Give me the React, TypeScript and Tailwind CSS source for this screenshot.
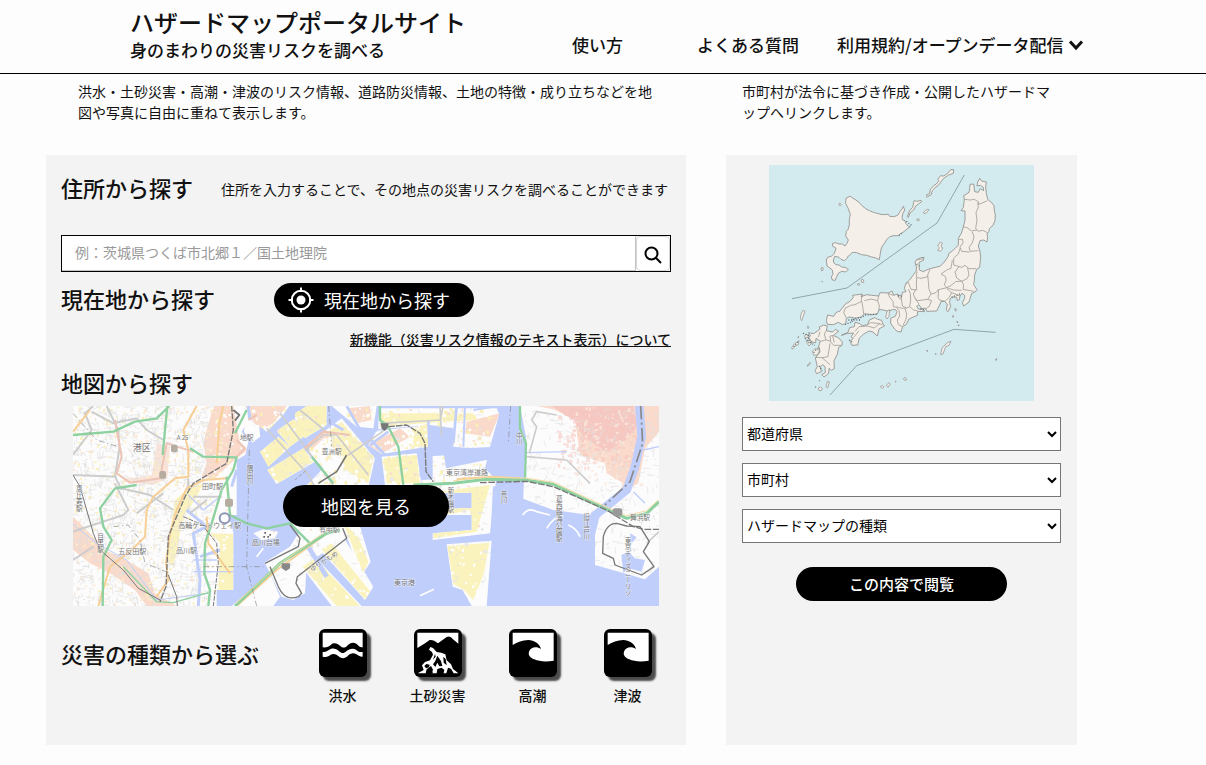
import type { ReactNode } from "react";

function makeRandom(seed: number) {
  let s = seed;
  return () => {
    s = (s * 1103515245 + 12345) % 2147483648;
    return s / 2147483648;
  };
}

type Zone = [number, number, number, number];

function speckle(seed: number, count: number, [x0, y0, x1, y1]: Zone, min: number, max: number) {
  const rnd = makeRandom(seed);
  let d = "";
  for (let i = 0; i < count; i++) {
    const x = Math.round(x0 + rnd() * (x1 - x0));
    const y = Math.round(y0 + rnd() * (y1 - y0));
    const w = Math.round(min + rnd() * (max - min));
    const h = Math.round(min + rnd() * (max - min));
    d += `M${x} ${y}h${w}v${h}h${-w}z`;
  }
  return d;
}

function streets(seed: number, count: number, [x0, y0, x1, y1]: Zone) {
  const rnd = makeRandom(seed);
  let d = "";
  for (let i = 0; i < count; i++) {
    const x = Math.round(x0 + rnd() * (x1 - x0));
    const y = Math.round(y0 + rnd() * (y1 - y0));
    const a = Math.round(rnd() * 18 + 5);
    const b = Math.round(rnd() * 14 - 7);
    d += rnd() > 0.5 ? `M${x} ${y}l${a} ${b}` : `M${x} ${y}l${b} ${a}`;
  }
  return d;
}

const LAND = [
  "M39 18H560L565 60 545 95 565 125 556 165 530 180V345H505L520 395V570H470V618H39Z",
  "M570 18H688L665 50 620 95 575 60Z",
  "M600 155L655 110 690 140 625 200Z",
  "M622 210L730 145 765 185 650 252Z",
  "M650 92L700 58 745 100 690 140Z",
  "M705 40L740 18H800V75L735 115 705 70Z",
  "M745 130L845 55 945 175 925 262H735L790 205 750 160Z",
  "M815 18H950L940 85 890 80Z",
  "M925 135L950 92 1085 78 1110 60 1105 140 1040 150 965 162Z",
  "M955 25H1310L1325 60 1300 150 1180 140V85L1110 75 955 88Z",
  "M965 170L1070 160 1085 255H975Z",
  "M555 50L598 75 600 110 578 128 552 95Z",
  "M735 262L900 250V400L640 485 610 490 690 440 715 400 690 372Z",
  "M615 490L660 460 860 350 900 400 880 440 860 415 740 490 735 580 700 600 665 590Z",
  "M580 400L610 388 655 395 645 415 605 420Z",
  "M515 618L630 520 660 590 640 618Z",
  "M725 500L765 470 905 618H815Z",
  "M780 450L850 410 940 560 915 600Z",
  "M850 370L900 380 932 485 900 535Z",
  "M1118 160L1150 155 1158 205 1290 178 1300 236 1292 400 1118 420V400L1235 390V345H1130V325H1235V278H1118Z",
  "M1160 433L1295 422 1280 618H1235L1208 570 1178 560Z",
  "M1380 18H1797V500L1755 538 1605 495V405L1625 325 1590 345 1480 330 1385 295Z",
  "M1085 240L1385 225 1390 250 1118 278 1085 262Z",
];

const LABELS: { x: number; y: number; size: number; text: string; vertical?: boolean }[] = [
  { x: 218, y: 154, size: 27, text: "港区" },
  { x: 350, y: 121, size: 18, text: "A 25" },
  { x: 540, y: 120, size: 20, text: "地駅" },
  { x: 426, y: 266, size: 21, text: "田町駅" },
  { x: 355, y: 385, size: 21, text: "高輪ゲートウェイ駅" },
  { x: 175, y: 461, size: 21, text: "五反田駅" },
  { x: 348, y: 458, size: 21, text: "品川駅" },
  { x: 575, y: 435, size: 21, text: "品川台場" },
  { x: 785, y: 163, size: 20, text: "豊洲駅" },
  { x: 778, y: 397, size: 20, text: "有明駅" },
  { x: 1158, y: 226, size: 21, text: "東京湾岸道路" },
  { x: 1002, y: 556, size: 21, text: "東京港" },
  { x: 1710, y: 360, size: 20, text: "舞浜駅" },
  { x: 570, y: 195, size: 20, text: "隅田川", vertical: true },
  { x: 58, y: 255, size: 20, text: "恵比寿駅", vertical: true },
  { x: 122, y: 398, size: 20, text: "目黒駅", vertical: true },
  { x: 1378, y: 95, size: 20, text: "中川", vertical: true },
  { x: 1332, y: 272, size: 20, text: "荒川", vertical: true },
  { x: 1173, y: 262, size: 19, text: "新木場駅", vertical: true },
  { x: 1498, y: 285, size: 20, text: "葛西臨海公園駅", vertical: true },
  { x: 1580, y: 340, size: 20, text: "旧江戸川", vertical: true },
  { x: 1704, y: 410, size: 20, text: "東京ディズニーリゾ", vertical: true },
];

function BayMap() {
  return (
    <svg viewBox="39 18 1758 600" preserveAspectRatio="none" className="block h-[200px] w-full" aria-hidden="true">
      <defs>
        <clipPath id="land">
          {LAND.map((d) => (
            <path key={d} d={d} />
          ))}
        </clipPath>
      </defs>
      <path fill="#c0cefb" d="M39 18h1758v600H39z" />
      <g fill="#fcfcfc">
        {LAND.map((d) => (
          <path key={d} d={d} />
        ))}
      </g>
      <g clipPath="url(#land)">
        <g fill="#f9dacb">
          <path d="M460 18H520L540 130 562 150 530 175 500 200 465 235 425 230 440 190 430 130Z" />
          <path d="M290 130L330 140 322 235 280 255 190 245 190 238 275 225Z" opacity=".7" />
          <path d="M39 350L75 385 135 450 190 475 265 520 285 580 350 618H260L225 570 150 520 90 490 39 450Z" />
          <path d="M1430 18H1797V95L1755 145 1735 250 1675 285 1690 250 1640 220 1635 190 1560 165 1545 60 1480 28Z" />
          <path d="M555 18H680L640 70 600 90 575 60Z" />
          <path d="M730 130L790 95 870 105 890 120 860 115 790 115 755 150ZM925 135L1020 85 1050 110 965 160ZM1220 65L1320 40 1290 110 1215 100ZM860 25L930 18 935 60 890 70Z" />
        </g>
        <g fill="#fbf3bd">
          <path d="M330 400L345 300 385 265 430 250 405 300 370 350 340 500 318 480Z" />
          <path d="M455 400L520 402 520 570 475 572 480 430Z" />
          <path d="M600 155L655 110 690 140 625 200ZM622 210L730 145 760 185 650 252Z" />
          <path d="M650 92L700 58 745 100 690 140ZM705 40L740 18H800V75L735 115 705 70ZM800 100L845 65 940 175 925 250 865 215Z" />
          <path d="M960 40H1240V60L1110 68 960 80ZM970 175L1070 165 1080 250 980 250ZM1060 85L1105 70V140L1060 140Z" />
          <path d="M1130 275L1290 255 1250 395 1120 415V400L1235 385 1230 330 1130 350Z" />
          <path d="M1162 438L1288 428 1272 520 1240 600 1212 570 1180 552Z" />
          <path d="M728 500L765 475 900 618H830ZM785 448L815 430 935 580 915 598ZM850 370L895 410 925 485 910 520Z" />
        </g>
        <path fill="#f3b9b9" opacity=".55" d="M1475 18L1720 18 1730 80 1690 125 1640 155 1570 110 1540 60Z" />
        <path fill="#f6c6bf" opacity=".6" d={speckle(11, 220, [1490, 18, 1735, 200], 3, 13)} />
        <path fill="#fbe6da" opacity=".8" d={speckle(13, 120, [1540, 18, 1740, 260], 3, 11)} />
        <path fill="#fbf1c0" d={speckle(21, 420, [39, 18, 520, 618], 2, 9)} />
        <path fill="#f9e6d3" d={speckle(31, 300, [39, 18, 500, 618], 2, 9)} />
        <path fill="#faefb6" d={speckle(41, 280, [590, 18, 1290, 260], 3, 12)} />
        <path fill="#f9dfcf" d={speckle(42, 110, [570, 18, 1290, 400], 3, 9)} />
        <path fill="#ffffff" d={speckle(43, 480, [450, 18, 1290, 600], 3, 10)} />
        <path fill="#e8e8e8" d={speckle(47, 110, [640, 100, 1290, 560], 4, 12)} />
        <path fill="none" stroke="#dfdfdf" strokeWidth="2" d={streets(51, 1300, [39, 18, 450, 618])} />
        <path fill="none" stroke="#e4e4e4" strokeWidth="2" d={streets(61, 300, [560, 18, 1290, 560])} />
        <path fill="none" stroke="#e2e2e2" strokeWidth="2" d={streets(71, 420, [1385, 30, 1797, 520])} />
      </g>

      <g fill="none" stroke="#c0cefb">
        <path strokeWidth="8" d="M860 18L895 80 975 165M800 60L850 90M955 18L948 95M1105 60L1112 240M1190 18L1180 130M930 135L985 95" />
        <path strokeWidth="6" d="M1215 18L1210 140M1240 30L1300 20" />
        <path strokeWidth="18" d="M1105 160L1290 150M1088 170V230" />
        <path strokeWidth="14" d="M745 440L800 530" />
        <path strokeWidth="9" d="M380 330L440 380 400 400 420 540 415 618M420 470L480 450M530 210L515 260" />
        <path strokeWidth="4" d="M385 285L430 330 480 290M400 480H470M400 515H520" />
        <path strokeWidth="3" d="M39 372L110 430 200 480 290 600 445 580" />
        <path strokeWidth="26" d="M1738 18L1745 110 1725 200 1700 270 1600 350" />
        <path strokeWidth="4" d="M1400 158L1520 155M1720 275L1755 310M1797 140L1750 150" />
      </g>
      <path fill="#c0cefb" d="M1325 18H1380L1398 110 1385 400H1290L1308 240 1275 205 1290 140Z" />
      <path fill="#c0cefb" d="M1684 465L1705 455 1725 475 1755 480 1745 515 1705 505 1690 520ZM1710 400L1730 412 1715 430Z" />
      <path
        fill="none"
        stroke="#fff"
        strokeWidth="5"
        d="M1388 345Q1405 320 1430 335L1470 345M1460 385Q1485 345 1510 350M1525 375Q1550 385 1560 410M590 470L610 445M1080 587L1122 568"
      />

      <g fill="none" stroke="#cdcdcd" strokeWidth="6" strokeLinejoin="round">
        <path d="M39 165L95 90 75 40 100 18M140 18L175 90 178 145 165 230 185 270M165 250L205 330 190 345 39 395M95 35L160 70 230 55 260 90 310 120M39 225L170 230M170 262L270 285 340 330M385 270V235M39 480L100 440M230 340L310 280M400 290H485M390 340L440 300" />
        <path d="M620 85L745 225 765 262M660 40L820 255M735 150L790 105 830 105 925 225M865 165L960 100 985 80M720 30L805 100M1140 18L1145 110M1150 18L1140 60 960 70" strokeWidth="5" />
        <path d="M1408 160L1430 80 1415 60 1430 35 1490 45M1400 170L1520 180 1590 250M1797 395L1760 430" strokeWidth="5" />
      </g>
      <g fill="none" stroke="#f7cf96" strokeWidth="6" strokeLinejoin="round">
        <path d="M39 95L90 30M410 18L370 90 385 150 385 230 345 235 280 290 260 330 255 410 215 450 150 500 115 618M490 18L478 70 470 190M500 235L430 240 380 265 350 330 330 400 318 490 325 540 290 590M440 350L445 430 510 520" />
        <path d="M530 618L650 510 800 400M1190 238L1290 230 1380 235" />
      </g>
      <path
        fill="none"
        stroke="#edc4b5"
        strokeWidth="6"
        d="M165 60L185 170 170 220 210 248 300 235 320 130 350 140 400 155M530 120L555 145 530 170M590 45L565 60M735 145L790 95 870 105"
      />
      <g fill="none" stroke="#8ed1a0" strokeWidth="7" strokeLinejoin="round">
        <path d="M39 105L160 95 225 65 290 55 328 18M322 18L315 90 308 165M390 145L430 170 530 172 520 210 485 270 455 370 435 430 433 520 450 570 445 618" />
        <path d="M560 30L525 100M500 230L510 345 560 370 620 385 690 370 750 430M230 255L165 265 120 325 130 380 155 420 130 470 128 618" />
        <path d="M755 170L820 250M960 18V60L985 80 1015 140 1030 255M1380 18V85L1398 130 1395 240" />
        <path strokeWidth="4" d="M190 500L290 605 340 608 445 578" />
        <path d="M525 618L660 490 800 400 840 390M1060 255L1180 250 1280 238 1395 240 1480 253 1600 310 1700 355 1760 340 1797 305" strokeWidth="9" />
      </g>
      <path fill="none" stroke="#f2d9a0" strokeWidth="3" d="M528 610L655 495 800 392M1180 242L1280 232 1395 234 1480 247 1600 303 1700 347 1760 332 1795 300" />
      <g fill="none" stroke="#777" strokeWidth="4" strokeLinejoin="round">
        <path d="M515 18L520 90 500 190 400 250 375 290 325 410 318 560 300 605" strokeDasharray="18 4" />
        <path strokeWidth="3" d="M39 225L60 260 100 400 120 450 190 510 235 565 300 600M325 525L350 590 352 618" />
        <path strokeWidth="3" d="M435 385L470 430 475 490 460 618M370 350L440 380" strokeDasharray="14 4" />
        <path d="M615 490L715 440 720 415 690 375M630 500L655 560Q675 605 715 590L725 580 708 550 712 530 860 415 848 385" />
        <path d="M775 250L830 215 860 165" strokeWidth="5" />
        <path d="M985 80L1040 75 1080 100 1095 130 1098 215 1120 245" strokeDasharray="20 3" />
        <path d="M1260 248L1400 244 1480 260 1640 330 1720 380 1750 388 1797 388" strokeDasharray="20 5" />
        <path d="M1630 410Q1640 370 1670 370L1700 378 1740 380 1768 425 1750 455 1782 500 1745 525 1665 495 1660 475 1628 460Z" />
        <path d="M520 30L538 45 525 62" strokeWidth="6" />
      </g>
      <g fill="none" stroke="#888" strokeWidth="2">
        <path d="M568 150L560 500 590 618M430 500H610M806 18L815 140M1352 18L1345 130M39 40L110 120 175 140M160 380L205 375 240 420 255 490 330 520" strokeDasharray="18 8 4 8" />
        <path d="M705 240L740 210" strokeDasharray="10 6" />
      </g>
      <path fill="none" stroke="#888" strokeWidth="5" strokeDasharray="40 10 6 10" d="M1742 18L1748 130 1710 245 1635 315" />
      <circle cx="494" cy="355" r="15" fill="none" stroke="#8d96b4" strokeWidth="6" />
      <g fill="#b5ada0">
        <rect x="333" y="134" width="20" height="23" rx="6" />
        <rect x="298" y="213" width="20" height="23" rx="6" />
        <rect x="495" y="296" width="24" height="24" rx="5" />
        <path d="M962 70h24l-3 14-9 9-9-7z" fill="#777" />
        <rect x="1658" y="325" width="29" height="24" rx="7" fill="#999" />
        <path d="M665 490h25v15l-12 8-13-8z" fill="#888" />
        <path d="M613 396h5v5h-5zM610 408h5v5h-5zM622 408h5v5h-5zM628 402h5v5h-5z" fill="#666" />
      </g>
      <g fill="#777" stroke="#fff" strokeWidth="3" strokeOpacity=".6" paintOrder="stroke">
        {LABELS.map((l) => (
          <text key={l.text} x={l.x} y={l.y} fontSize={l.size} writingMode={l.vertical ? "vertical-rl" : undefined}>
            {l.text}
          </text>
        ))}
        <text x="755" y="515" fontSize="19" transform="rotate(-32 755 515)">
          ゆりかもめ
        </text>
      </g>
    </svg>
  );
}

const ISLETS =
  "M221 132l4-3 4 4-4 5zM168 324l5-2 2 8-5 3zM455 178l6-2 2 5-6 1zM476 156l10-8 6 1-8 10-7 2zM518 258l8-12 6 4-4 10 6 4-8 10-8-3 5-8zM288 360l6-2 3 8-6 2zM277 372l5-2 3 4-6 2zM108 462l6-11 6 3-7 20-3 8-4-6zM80 562l10-12 12-8-2 12-10 4-8 10zM128 498l4 4-3 4zM126 618l9-11 2 2-8 9zM183 680l4-16 6 2-5 18zM160 684l6-3 6 4-2 6-8 1zM346 680l6-4 5 5-5 4zM364 676l8-8 4 4-7 10zM415 656l5-4 5 8-6 1zM527 584l4-20 16-16 11-4-6 12-10 4-8 22zM485 571l4 1-2 3zM511 580l3 2-2 2zM691 600l4-5-1 6zM562 468l4-2-2 6zM576 483l3 5-3-1zM579 495l4 1-3 2zM569 446l5 1-2 7zM362 472l4-18 8-5-2 20-6 8zM118 528l8-6 4 10-8 2zM126 540l10 0 4 10-8 8-6-8zM142 574l8-8 14 4-6 14-12 2zM170 364l3 1-2 1zM150 680h3v2h-3zM163 661h2v2h-2zM391 664h2v2h-2zM98 533l3-4v4z";

function JapanMap() {
  return (
    <svg viewBox="12 15 795 708" className="mx-auto block h-[236px] w-[265px] bg-[#d3ebef]" role="img" aria-label="日本地図">
      <g fill="#f4efe9" stroke="#8a8a86" strokeWidth="2.4" strokeLinejoin="round">
        <path d="M243 115L256 108 262 114 270 118 282 127 290 136 302 146 313 152 325 157 340 161 352 164 370 163 374 169 386 170 398 166 405 155 412 145 415 139 419 150 413 162 411 172 413 180 420 182 422 190 429 198 436 200 425 208 414 217 405 222 402 227 385 227 374 230 365 239 358 250 349 264 346 280 343 299 330 293 320 291 305 286 290 284 275 278 262 277 256 284 250 288 245 296 238 302 228 298 222 292 209 289 205 300 206 308 213 314 222 315 230 321 240 322 250 328 242 336 230 334 220 340 214 352 211 361 202 360 199 351 204 343 202 330 192 322 186 318 184 300 188 292 200 288 208 280 213 264 202 258 203 250 212 248 222 252 232 252 240 258 246 250 250 240 242 228 244 214 249 209 253 195 253 178 256 163 250 146 242 130Z" />
        <path d="M427 170L434 152 443 142 447 122 456 124 468 121 470 125 452 138 446 150 436 158 430 172ZM486 112L485 104 494 101 496 88 507 76 514 72 522 62 518 58 527 47 536 48 548 40 557 29 566 29 565 40 551 45 536 55 520 76 511 82 502 92 498 105 489 109Z" />
        <path d="M598 116L596 107 606 101 612 97 614 86 615 73 626 72 628 86 629 95 640 97 645 86 656 92 655 82 646 76 636 78 638 66 644 55 650 63 664 66 662 80 664 100 668 118 680 128 687 137 688 152 691 165 690 182 684 196 673 206 672 214 666 222 668 232 666 246 656 240 645 242 640 258 645 275 647 292 645 310 644 322 635 328 629 345 628 362 626 374 636 389 630 396 620 400 616 414 612 426 596 438 592 428 599 415 599 406 591 400 585 408 583 419 577 422 575 412 562 411 555 417 554 428 557 440 549 455 544 450 547 432 538 424 528 425 524 435 515 453 486 454 480 444 470 446 462 434 455 439 460 447 477 450 479 455 458 454 457 466 450 469 432 477 424 493 413 500 408 516 397 514 389 507 377 490 377 475 391 469 396 455 392 449 382 449 371 454 350 449 342 449 337 462 320 464 300 461 286 472 270 474 252 471 244 476 242 491 233 494 220 487 205 494 187 493 184 482 188 465 206 469 214 457 225 453 241 432 255 424 265 412 263 406 292 402 288 410 305 404 320 406 341 408 345 398 370 399 381 393 386 406 398 402 400 409 411 405 412 397 423 395 418 385 423 370 433 361 444 346 453 334 455 324 450 306 454 300 468 293 477 292 475 301 462 307 463 330 475 335 489 328 510 322 525 319 538 306 549 290 551 281 562 273 573 262 580 256 580 235 589 220 594 204 600 180 600 153 588 152 595 142 597 128Z" />
        <path d="M229 526L249 517 254 503 268 500 270 487 282 490 292 497 308 494 313 480 329 473 338 478 350 481 354 493 359 497 342 507 337 528 324 516 312 513 295 523 283 534 278 555 261 556 255 544 265 535 258 530 266 519 248 520Z" />
        <path d="M130 518L145 521 158 513 165 507 163 501 176 495 187 498 184 512 203 516 211 508 221 514 211 521 206 527 220 533 232 546 231 556 221 562 217 583 207 602 208 626 199 631 192 625 191 640 177 651 170 644 181 638 180 620 173 614 166 620 169 635 155 641 150 632 157 620 151 594 165 576 163 562 158 566 166 544 153 535 152 548 141 546 130 532 137 528Z" />
        <path d={ISLETS} strokeWidth="2" />
      </g>
      <g fill="none" stroke="#a09a94" strokeWidth="2.4" strokeLinejoin="round">
        <path d="M598 118L616 120 628 118 641 126 641 133 654 128 667 122M638 128L640 142 633 158 636 180 632 205 640 214 652 211 668 218M594 200L608 204 619 213 636 210M622 216L627 230 622 248 612 262 616 274 640 272M582 238L593 238 594 248 585 262 590 274 614 276M585 265L580 282 566 294 566 315 590 322 600 316 612 326 634 326M562 300L558 325 545 330 528 342M608 324L612 345 606 356 590 364 575 354 570 336 582 320M528 342L542 350 543 361 538 375 546 383 560 375 572 365 590 363M590 363L596 375 594 388 626 394M546 383L565 390 590 391M545 383L521 389 519 412 523 420 540 424 553 412 560 398 545 386M560 398L585 408M495 328L488 345 490 365 492 388 498 402 513 398 520 388M456 334L454 352 468 355 488 350M455 354L454 372 455 390 438 388 430 368 422 370M452 388L445 402 450 415 458 422 488 418 498 402M450 415L462 432M488 418L500 422 492 440 480 448M430 388L436 400 437 420 434 440 425 444 412 438 409 415 411 405M398 402L400 412 410 420M385 406L369 400 374 412 384 424 385 440 395 442 400 450M395 440L410 445 425 444M402 450L404 468 397 480 400 494 412 500M420 446L425 462 423 478 414 496M434 440L446 450 457 452M341 408L338 422 343 438 341 452M292 404L289 418 293 438 296 462M298 422L318 417 338 422M289 424L270 434 257 436 242 444M242 442L236 458 244 474M455 300L475 296" />
        <path d="M270 514L282 500 308 498 327 504 345 490M308 494L316 488 340 490 352 494M282 512L266 532M184 512L178 522 183 540 165 544M184 540L197 544 195 528 206 526M196 544L206 556 231 556M195 550L191 576 189 590 171 593 152 592M171 593L184 604 195 614M203 528L208 548M165 515L160 532" />
      </g>
      <path fill="none" stroke="#93a4a9" strokeWidth="3" d="M81 416L246 384 516 189 598 45M195 705L275 617 567 508 692 517" />
      <path
        fill="none"
        stroke="#5e6a6d"
        strokeWidth="4"
        strokeDasharray="3 5"
        d="M240 493L262 486 262 478 290 472 300 465 340 462M250 480L285 480M252 540L262 546M114 520L130 526 132 545 150 556M120 535L135 552M146 578L156 566M162 618L172 632M455 312L463 318M400 406L411 412M424 184L440 196M402 226L410 220M86 560L98 546M560 412L590 400M466 446L478 450"
      />
    </svg>
  );
}

function IconFrame({ children }: { children: ReactNode }) {
  return (
    <svg
      viewBox="0 0 144 144"
      className="size-12 rounded-md bg-black shadow-[4px_4px_2px_#4b4b4b]"
      fill="#fff"
      aria-hidden="true"
    >
      {children}
    </svg>
  );
}

function FloodIcon() {
  return (
    <IconFrame>
      <path d="M11 11H131V55C121 55 119 49 112 44C101 38 91 43 84 51C77 58 70 57 63 50C55 42 44 40 36 47C29 53 23 56 11 55Z" />
      <path d="M11 69C23 69 27 64 35 60C44 57 53 60 60 67C68 74 75 74 82 67C91 58 104 57 112 63C119 69 123 70 131 69V83C121 83 118 79 111 75C103 71 93 73 86 81C77 90 66 89 58 81C49 73 41 73 33 79C26 84 21 85 11 83Z" />
    </IconFrame>
  );
}

function LandslideIcon() {
  return (
    <IconFrame>
      <path d="M10 11H133V44L117 31Q109 19 98 24L72 43Q58 31 47 33L31 44 10 57Z" />
      <path d="M49 54L57 57 68 69 82 71 94 76 98 94 111 106 117 120 133 133H119L111 119 102 116 97 133H88L91 123 83 116 70 120 68 133H53L57 122 51 111 38 121 35 133H11L29 123 24 109 33 99 48 94 57 77 54 69 45 62Z" />
      <path
        fill="#000"
        d="M70 80L64 96 57 106 64 114 70 101 76 112 85 111 81 96ZM88 83L89 101 98 109 95 90ZM37 105L31 111 36 118 45 115 47 107ZM44 123h9l4 10H41zM82 119l8 4-2 10H74zM104 118l8 9-1 6-9-2zM63 75L57 92 53 97 65 83Z"
      />
    </IconFrame>
  );
}

function WaveIcon() {
  return (
    <IconFrame>
      <path d="M11 11H134V95C113 99 91 98 76 91C62 85 57 78 60 68C64 54 83 50 96 60C92 43 75 34 58 33C39 34 26 39 11 48Z" />
    </IconFrame>
  );
}

const HAZARDS = [
  { label: "洪水", icon: <FloodIcon /> },
  { label: "土砂災害", icon: <LandslideIcon /> },
  { label: "高潮", icon: <WaveIcon /> },
  { label: "津波", icon: <WaveIcon /> },
];

const SELECTS = ["都道府県", "市町村", "ハザードマップの種類"];

function Heading({ children }: { children: ReactNode }) {
  return <h2 className="pb-1 text-[22px] leading-7 font-medium whitespace-nowrap">{children}</h2>;
}

export default function App() {
  return (
    <div className="min-h-screen bg-[#fdfdfd] pb-5 font-['Noto_Sans_CJK_JP',sans-serif] text-sm leading-[21px] text-[#111] [line-break:normal]">
      <header className="flex items-start border-b border-black pt-1.5 pb-[11px] pl-[130px]">
        <div className="whitespace-nowrap">
          <h1 className="text-2xl leading-8 font-medium">ハザードマップポータルサイト</h1>
          <p className="text-[17px] leading-6 font-medium">身のまわりの災害リスクを調べる</p>
        </div>
        <nav className="mt-[27px] ml-[106px] flex text-[17px] leading-6 font-medium whitespace-nowrap">
          <a href="#usage">使い方</a>
          <a href="#faq" className="ml-[74px]">
            よくある質問
          </a>
          <a href="#terms" className="ml-[38px] flex items-center gap-1">
            利用規約/オープンデータ配信
            <svg viewBox="0 0 16 12" className="h-3 w-4" fill="none" stroke="currentColor" strokeWidth="3" aria-hidden="true">
              <path d="M2 2.5L8 9 14 2.5" />
            </svg>
          </a>
        </nav>
      </header>

      <main className="grid max-w-[1123px] grid-cols-[minmax(0,640fr)_minmax(0,351fr)] gap-x-10 px-[46px] pt-[7px]">
        <p className="mb-8 px-8">
          洪水・土砂災害・高潮・津波のリスク情報、道路防災情報、土地の特徴・成り立ちなどを地図や写真に自由に重ねて表示します。
        </p>
        <p className="mb-8 px-4">市町村が法令に基づき作成・公開したハザードマップへリンクします。</p>

        <section className="bg-[#f3f3f3] px-[15px] pt-[18px] pb-[39px]">
          <div className="flex items-center gap-7">
            <Heading>住所から探す</Heading>
            <p>住所を入力することで、その地点の災害リスクを調べることができます</p>
          </div>

          <form className="mt-[30px] flex h-[37px] border border-black bg-white" onSubmit={(e) => e.preventDefault()}>
            <input
              type="text"
              aria-label="住所"
              placeholder="例：茨城県つくば市北郷１／国土地理院"
              className="min-w-0 flex-1 border border-t-0 border-l-0 border-[#c4c4c4] px-[13px] pb-0.5 outline-none placeholder:text-[#999]"
            />
            <button type="submit" aria-label="検索" className="flex w-[34px] items-center justify-center rounded border border-[#d4d4d4]">
              <svg viewBox="0 0 18 18" className="mt-0.5 size-[18px]" fill="none" stroke="#000" strokeWidth="2" aria-hidden="true">
                <circle cx="7.5" cy="7.5" r="6" />
                <path d="M11.8 11.8L17 17" />
              </svg>
            </button>
          </form>

          <div className="mt-[11px] flex items-center gap-[59px]">
            <Heading>現在地から探す</Heading>
            <button className="flex h-[34px] w-[200px] items-center gap-2.5 rounded-full bg-black pl-3.5 text-lg leading-6 text-white">
              <svg viewBox="0 0 26 26" className="size-[26px]" fill="none" stroke="#fff" strokeWidth="2" aria-hidden="true">
                <circle cx="13" cy="13" r="9.3" />
                <circle cx="13" cy="13" r="4.5" fill="#fff" stroke="none" />
                <path d="M13 0.5V5M13 21V25.5M0.5 13H5M21 13H25.5" />
              </svg>
              現在地から探す
            </button>
          </div>

          <p className="mt-3 text-right font-medium">
            <a href="#new-feature" className="underline">
              新機能（災害リスク情報のテキスト表示）について
            </a>
          </p>

          <div className="mt-[18px]">
            <Heading>地図から探す</Heading>
          </div>
          <div className="relative mx-3 mt-1.5">
            <BayMap />
            <button className="absolute top-1/2 left-1/2 h-[42px] w-[166px] -translate-x-1/2 -translate-y-1/2 rounded-full bg-black text-lg leading-6 text-white">
              地図を見る
            </button>
          </div>

          <div className="mt-[23px] flex items-start justify-between">
            <div className="pt-2.5">
              <Heading>災害の種類から選ぶ</Heading>
            </div>
            <ul className="-mr-1 flex">
              {HAZARDS.map((h) => (
                <li key={h.label} className="w-[95px]">
                  <a href={`#${h.label}`} className="flex flex-col items-center gap-2 font-medium">
                    {h.icon}
                    {h.label}
                  </a>
                </li>
              ))}
            </ul>
          </div>
        </section>

        <section className="bg-[#f3f3f3] px-4 pt-2.5">
          <JapanMap />
          <div className="mt-4 flex flex-col gap-3">
            {SELECTS.map((s) => (
              <select key={s} aria-label={s} className="h-[34px] w-full border border-[#767676] bg-white pb-0.5 text-black">
                <option>{s}</option>
              </select>
            ))}
          </div>
          <button className="mx-auto mt-6 block h-[34px] w-[211px] rounded-full bg-black pb-0.5 text-[15px] font-medium text-white">
            この内容で閲覧
          </button>
        </section>
      </main>
    </div>
  );
}
